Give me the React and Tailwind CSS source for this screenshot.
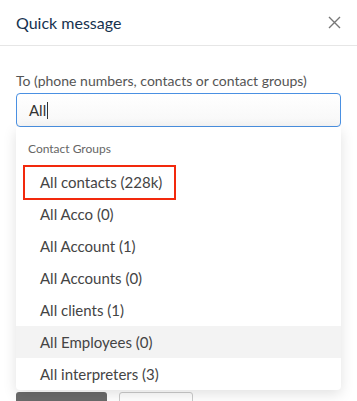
import React from 'react';

const GROUPS = [
  { label: 'All contacts (228k)', marked: true },
  { label: 'All Acco (0)' },
  { label: 'All Account (1)' },
  { label: 'All Accounts (0)' },
  { label: 'All clients (1)' },
  { label: 'All Employees (0)', hover: true },
  { label: 'All interpreters (3)' },
];

export default function App() {
  return (
    <div className="relative h-[401px] w-[357px] overflow-hidden bg-white font-['Lato',sans-serif]">
      <header className="flex h-[46px] items-center justify-between border-b border-[#e6e6e6] pl-4 pr-4">
        <h1 className="text-[16px] text-[#16324f]">Quick message</h1>
        <svg width="13" height="13" viewBox="0 0 13 13" className="text-[#777]">
          <path d="M1 1 L12 12 M12 1 L1 12" stroke="currentColor" strokeWidth="1.4" />
        </svg>
      </header>

      <div className="px-4 pt-[25px]">
        <label className="block text-[14px] leading-[20px] text-[#555]">
          To (phone numbers, contacts or contact groups)
        </label>
        <div className="relative mt-[2px]">
          <div className="flex h-[34px] items-center rounded-[4px] border border-[#4a90e2] bg-gradient-to-b from-white to-[#f7f7f7] px-3 text-[15px] text-[#333]">
            All<span className="ml-[1px] inline-block h-[17px] w-[1px] bg-[#333]" />
          </div>

          <div className="absolute left-0 right-0 top-[34px] z-10 rounded-b-[4px] bg-white shadow-[0_4px_14px_rgba(0,0,0,0.12)]">
            <div className="px-3 pt-[14px] pb-[9px] text-[12px] leading-[16px] text-[#666]">Contact Groups</div>
            <ul>
              {GROUPS.map((g) => (
                <li
                  key={g.label}
                  className={
                    'relative flex h-[32px] items-center pl-6 text-[15px] text-[#444] ' +
                    (g.hover ? 'bg-[#f3f3f3]' : '')
                  }
                >
                  {g.label}
                  {g.marked && (
                    <span className="absolute left-[7px] top-[-1px] h-[35px] w-[153px] border-2 border-[#f2290d]" />
                  )}
                </li>
              ))}
            </ul>
          </div>
        </div>

        <div className="mt-[265px] flex gap-3">
          <button className="h-[32px] w-[91px] self-start rounded-[3px] bg-[#6b6b6b] pl-4 pt-[2px] text-left text-[15px] leading-[18px] text-white">
            Send now
          </button>
          <button className="h-[32px] w-[74px] self-start rounded-[3px] border border-[#ccc] bg-white pl-4 pt-[1px] text-left text-[15px] leading-[18px] text-[#2a7bd3]">
            Cancel
          </button>
        </div>
      </div>
    </div>
  );
}
